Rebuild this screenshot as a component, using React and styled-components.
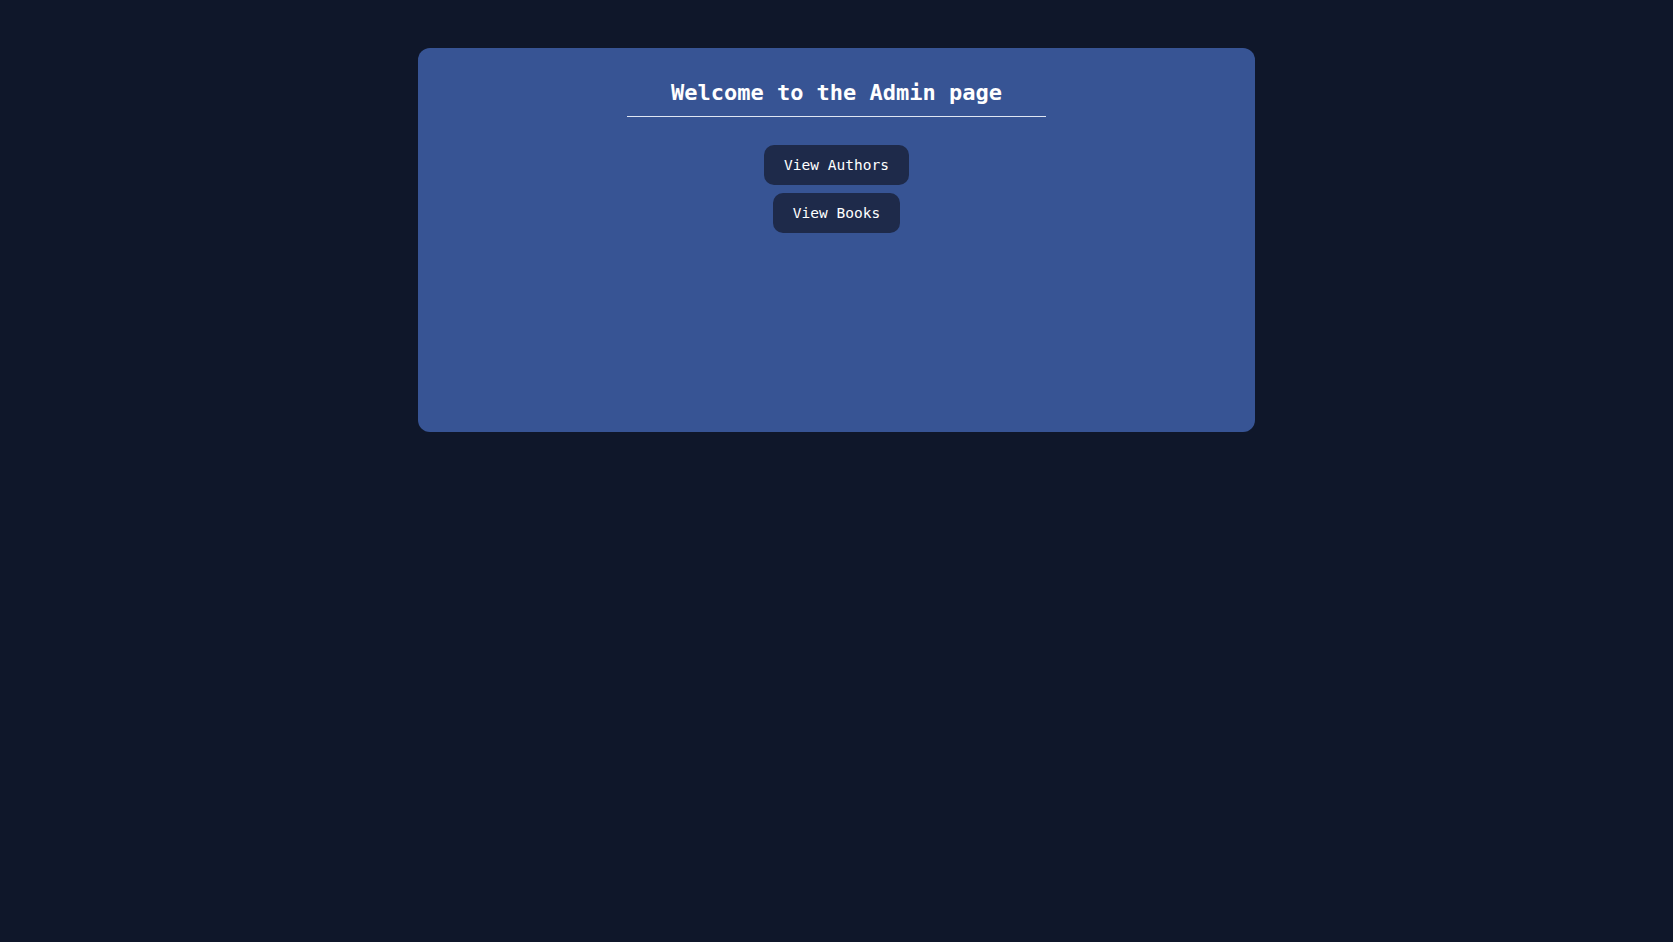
import React from "react";
import styled, { createGlobalStyle } from "styled-components";

const GlobalStyle = createGlobalStyle`
  body {
    margin: 0;
    background-color: #0f172a;
    font-family: "DejaVu Sans Mono", "Liberation Mono", monospace;
    color: #fff;
  }
`;

const Page = styled.div`
  min-height: 942px;
  padding-top: 48px;
  box-sizing: border-box;
`;

const Card = styled.div`
  width: 50%;
  min-height: 384px;
  margin: 0 auto;
  background-color: #375494;
  border-radius: 12px;
  padding-top: 32px;
  box-sizing: border-box;
  display: flex;
  flex-direction: column;
  align-items: center;
`;

const Title = styled.h1`
  width: 50%;
  margin: 0 0 28px;
  padding-bottom: 10px;
  border-bottom: 1px solid #dfe6f3;
  font-size: 22px;
  line-height: 26.4px;
  font-weight: 700;
  text-align: center;
`;

const ButtonList = styled.div`
  display: flex;
  flex-direction: column;
  align-items: center;
  gap: 8px;
`;

const Button = styled.button`
  height: 40px;
  padding: 0 20px;
  border: none;
  border-radius: 10px;
  background-color: #1e2a4a;
  color: #fff;
  font-family: inherit;
  font-size: 14.5px;
  cursor: pointer;
`;

function App() {
  return (
    <>
      <GlobalStyle />
      <Page>
        <Card>
          <Title>Welcome to the Admin page</Title>
          <ButtonList>
            <Button>View Authors</Button>
            <Button>View Books</Button>
          </ButtonList>
        </Card>
      </Page>
    </>
  );
}

export default App;
